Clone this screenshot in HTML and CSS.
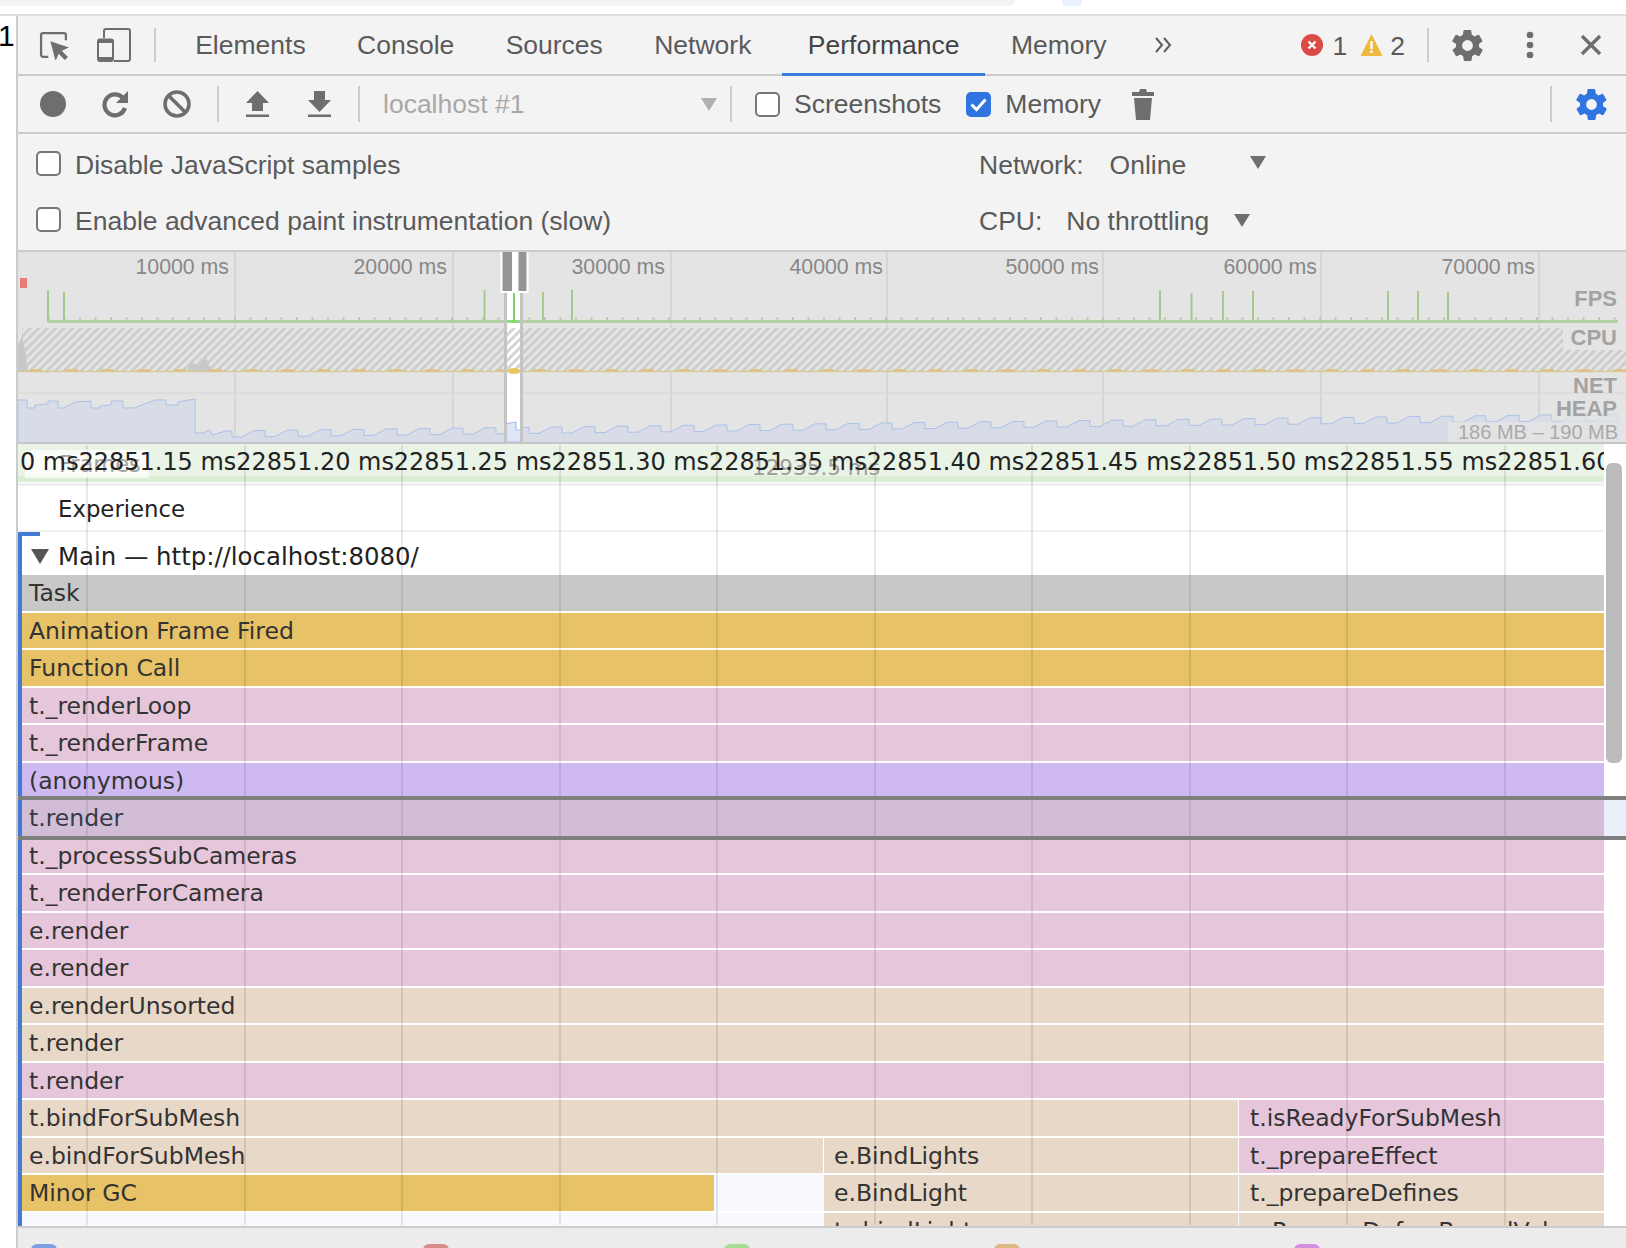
FILE: index.html
```html
<!DOCTYPE html>
<html lang="en">
<head>
<meta charset="utf-8">
<title>DevTools Performance</title>
<link rel="stylesheet" href="styles.css">
</head>
<body>
<div class="page">
  <div class="strip"><div class="strip-gray"></div><div class="strip-blue"></div></div>
  <div class="content">
    <div class="gutter">1</div>
    <div class="devtools">

      <div class="bar bar-tabs">
        <svg class="ic ic-inspect" viewBox="0 0 29 28"><path d="M9 25H4a2 2 0 0 1-2-2V4a2 2 0 0 1 2-2h20a2 2 0 0 1 2 2v5" fill="none" stroke="#6e6e6e" stroke-width="2.2"/><path d="M11 10l18 6-7 3 6 6-3 3-6-6-3 7z" fill="#6e6e6e"/></svg>
        <svg class="ic ic-device" viewBox="0 0 34 34"><path d="M7 10V3a2 2 0 0 1 2-2h22a2 2 0 0 1 2 2v28a2 2 0 0 1-2 2H17" fill="none" stroke="#6e6e6e" stroke-width="2"/><rect x="1" y="11.500" width="15" height="21.500" rx="2" fill="none" stroke="#6e6e6e" stroke-width="2"/><rect x="1" y="11" width="15" height="4" fill="#6e6e6e"/><rect x="1" y="29" width="15" height="4" fill="#6e6e6e"/></svg>
        <span class="sep sep-tabs"></span>
        <div class="tabs">
          <span class="tab">Elements</span>
          <span class="tab">Console</span>
          <span class="tab">Sources</span>
          <span class="tab">Network</span>
          <span class="tab tab-active">Performance</span>
          <span class="tab">Memory</span>
        </div>
        <svg class="ic ic-more" viewBox="0 0 19 16"><path d="M2 1l6 7-6 7M10 1l6 7-6 7" fill="none" stroke="#5f5f5f" stroke-width="2"/></svg>
        <span class="spacer"></span>
        <svg class="ic ic-badge" viewBox="0 0 22 22"><circle cx="11" cy="11" r="11" fill="#dc4a45"/><path d="M7.500 7.500l7 7M14.500 7.500l-7 7" stroke="#fff" stroke-width="2.400"/></svg>
        <span class="count">1</span>
        <svg class="ic ic-badge ic-warn" viewBox="0 0 22 22"><path d="M11 0l11 22H0z" fill="#f0b93e"/><rect x="9.800" y="7" width="2.400" height="8" fill="#fff"/><rect x="9.800" y="16.500" width="2.400" height="2.500" fill="#fff"/></svg>
        <span class="count count-warn">2</span>
        <span class="sep sep-err"></span>
        <svg class="ic ic-gear" viewBox="0 0 24 24"><path fill="#6e6e6e" d="M19.400 13c.1-.3.1-.7.100-1s0-.7-.1-1l2.100-1.600c.2-.2.200-.4.100-.6l-2-3.500c-.1-.2-.4-.3-.6-.2l-2.500 1c-.5-.4-1.100-.7-1.700-1l-.4-2.700c0-.2-.2-.4-.5-.4h-4c-.3 0-.5.200-.5.400l-.4 2.700c-.6.300-1.200.6-1.700 1l-2.500-1c-.2-.1-.5 0-.6.200l-2 3.500c-.1.200-.1.400.1.600L4.600 11c-.1.300-.1.700-.1 1s0 .7.100 1l-2.100 1.600c-.2.200-.2.400-.1.600l2 3.500c.1.200.4.3.6.2l2.500-1c.5.400 1.100.7 1.700 1l.4 2.700c0 .2.200.4.500.4h4c.3 0 .5-.2.500-.4l.4-2.700c.6-.3 1.200-.6 1.700-1l2.500 1c.2.100.5 0 .6-.2l2-3.500c.1-.2.1-.4-.1-.6zM12 15.500a3.500 3.500 0 1 1 0-7 3.500 3.500 0 0 1 0 7z"/></svg>
        <svg class="ic ic-dots" viewBox="0 0 8 28"><circle cx="4" cy="4" r="3.300" fill="#6e6e6e"/><circle cx="4" cy="14" r="3.300" fill="#6e6e6e"/><circle cx="4" cy="24" r="3.300" fill="#6e6e6e"/></svg>
        <svg class="ic ic-close" viewBox="0 0 22 22"><path d="M2 2l18 18M20 2L2 20" stroke="#6e6e6e" stroke-width="3.400"/></svg>
      </div>

      <div class="bar bar-actions">
        <svg class="ic ic-record" viewBox="0 0 26 26"><circle cx="13" cy="13" r="13" fill="#6e6e6e"/></svg>
        <svg class="ic ic-reload" viewBox="0 0 27 27"><path d="M23 17a10.500 10.500 0 1 1-2-10" fill="none" stroke="#6e6e6e" stroke-width="4.200"/><path d="M26 0v12H14z" fill="#6e6e6e"/></svg>
        <svg class="ic ic-clear" viewBox="0 0 28 28"><circle cx="14" cy="14" r="12" fill="none" stroke="#6e6e6e" stroke-width="3.600"/><path d="M6 6l16 16" stroke="#6e6e6e" stroke-width="3.600"/></svg>
        <span class="sep sep-clear"></span>
        <svg class="ic ic-load" viewBox="0 0 23 26"><path d="M11.500 0L23 12h-6v8H6v-8H0z" fill="#6e6e6e"/><rect y="23.500" width="23" height="2.500" fill="#6e6e6e"/></svg>
        <svg class="ic ic-save" viewBox="0 0 23 26"><path d="M6 0h11v9h6L11.500 21 0 9h6z" fill="#6e6e6e"/><rect y="23.500" width="23" height="2.500" fill="#6e6e6e"/></svg>
        <span class="sep sep-save"></span>
        <span class="target">localhost #1</span>
        <span class="arrow arrow-target"></span>
        <span class="sep sep-target"></span>
        <span class="check"></span>
        <span class="label label-shots">Screenshots</span>
        <span class="check check-on"><svg viewBox="0 0 25 25"><path d="M5.500 12.500l5 5 9-10" fill="none" stroke="#fff" stroke-width="3"/></svg></span>
        <span class="label label-mem">Memory</span>
        <svg class="ic ic-trash" viewBox="0 0 22 31"><path d="M8 0h6l1 3h7v4H0V3h7zM2 9h18l-2 22H4z" fill="#6e6e6e"/></svg>
        <span class="spacer"></span>
        <span class="sep sep-capture"></span>
        <svg class="ic ic-gear ic-gear-blue" viewBox="0 0 24 24"><path fill="#2f74e0" d="M19.400 13c.1-.3.1-.7.100-1s0-.7-.1-1l2.100-1.600c.2-.2.200-.4.100-.6l-2-3.500c-.1-.2-.4-.3-.6-.2l-2.500 1c-.5-.4-1.100-.7-1.700-1l-.4-2.700c0-.2-.2-.4-.5-.4h-4c-.3 0-.5.200-.5.400l-.4 2.700c-.6.300-1.200.6-1.700 1l-2.500-1c-.2-.1-.5 0-.6.200l-2 3.500c-.1.200-.1.400.1.600L4.600 11c-.1.300-.1.700-.1 1s0 .7.100 1l-2.100 1.600c-.2.200-.2.400-.1.600l2 3.500c.1.200.4.3.6.2l2.500-1c.5.400 1.100.7 1.700 1l.4 2.700c0 .2.200.4.500.4h4c.3 0 .5-.2.500-.4l.4-2.700c.6-.3 1.200-.6 1.700-1l2.500 1c.2.100.5 0 .6-.2l2-3.500c.1-.2.1-.4-.1-.6zM12 15.500a3.500 3.500 0 1 1 0-7 3.500 3.500 0 0 1 0 7z"/></svg>
      </div>

      <div class="options">
        <div class="opt-row">
          <span class="opt-left"><span class="check"></span><span class="label">Disable JavaScript samples</span></span>
          <span class="label opt-name">Network:</span>
          <span class="label opt-net">Online</span>
          <span class="arrow arrow-net"></span>
        </div>
        <div class="opt-row">
          <span class="opt-left"><span class="check"></span><span class="label">Enable advanced paint instrumentation (slow)</span></span>
          <span class="label opt-name">CPU:</span>
          <span class="label opt-cpu">No throttling</span>
          <span class="arrow arrow-cpu"></span>
        </div>
      </div>

      <div class="overview">
        <div class="ov-ruler">
          <div class="ov-cell">10000 ms</div>
          <div class="ov-cell">20000 ms</div>
          <div class="ov-cell">30000 ms</div>
          <div class="ov-cell">40000 ms</div>
          <div class="ov-cell">50000 ms</div>
          <div class="ov-cell">60000 ms</div>
          <div class="ov-cell">70000 ms</div>
        </div>
        <svg class="ov-graph" viewBox="18 252 1608 190">
          <defs>
            <pattern id="hatch" width="6" height="6" patternUnits="userSpaceOnUse" patternTransform="rotate(45)"><rect width="6" height="6" fill="#e4e4e4"/><rect width="3" height="6" fill="#cdcdcd"/></pattern>
            <pattern id="hatch-sel" width="6" height="6" patternUnits="userSpaceOnUse" patternTransform="rotate(45)"><rect width="6" height="6" fill="#fff"/><rect width="3" height="6" fill="#d4d4d4"/></pattern>
          </defs>
          <rect x="20" y="278" width="7" height="10" fill="#e57f76"/>
          <path d="M48 290V322M64 292V322M484.500 290V322M543 292V322M572 290V322M1160 290V322M1191.500 293V322M1223 291V322M1253 291V322M1388 291V322M1418 291V322M1448 292V322" stroke="#a5c98f" stroke-width="2"/>
          <rect x="48" y="320" width="1570" height="3" fill="#b0d2a0"/>
          <line x1="48" y1="318.500" x2="1618" y2="318.500" stroke="#a5c98f" stroke-width="2" stroke-dasharray="2 13.500"/>
          <rect x="22" y="328" width="1604" height="44" fill="url(#hatch)"/>
          <path d="M18 372V345L22 336 26 355 28 372zM186 372L192 362 198 366 206 358 212 372z" fill="#c8c8c8"/>
          <line x1="18" y1="371.500" x2="1626" y2="371.500" stroke="#dcc596" stroke-width="1.500"/>
          <line x1="30" y1="370.500" x2="1626" y2="370.500" stroke="#dfc283" stroke-width="2.500" stroke-dasharray="11 25" stroke-linecap="round"/>
          <line x1="18" y1="393" x2="1626" y2="393" stroke="#dbdbdb" stroke-width="1.500"/>
          <path fill="#d8dce6" stroke="#abc1ea" stroke-width="1" d="M18 400H27V408H35V405L48 404V401H58V408H64L75 402 91 401V408H100V406L111 405V401H123V408H134L155 400H166V405H178V402L195 399V433H203L210 430 212 435 226 431H232v6h10l12-6.400h11v6h10l12-6.400h11v6h10l12-6.400h11v6h10l12-6.400h11v6h10l12-6.400h11v6h10l12-6.400h11v6h10l12-6.400h11v6h10l12-6.400h11v6h10l12-6.400h11v6h10l12-6.400h11v6h10l12-6.400h11v6h10l12-6.400h11v6h10l12-6.400h11v6h10l12-6.400h11v6h10l12-6.400h11v6h10l12-6.400h11v6h10l12-6.400h11v6h10l12-6.400h11v6h10l12-6.400h11v6h10l12-6.400h11v6h10l12-6.400h11v6h10l12-6.400h11v6h10l12-6.400h11v6h10l12-6.400h11v6h10l12-6.400h11v6h10l12-6.400h11v6h10l12-6.400h11v6h10l12-6.400h11v6h10l12-6.400h11v6h10l12-6.400h11v6h10l12-6.400h11v6h10l12-6.400h11v6h10l12-6.400h11v6h10l12-6.400h11v6h10l12-6.400h11v6h10l12-6.400h11v6h10l12-6.400h11v6h10l12-6.400h11v6h10l12-6.400h11v6h10l12-6.400h11v6h10l12-6.400h11v6h10l12-6.400h11V443H18z"/>
          <rect x="505" y="293" width="17" height="149" fill="#fff"/>
          <rect x="505" y="328" width="17" height="44" fill="url(#hatch-sel)"/>
          <rect x="505" y="320" width="17" height="3" fill="#8fe07a"/>
          <line x1="514" y1="292" x2="514" y2="322" stroke="#7fd06a" stroke-width="2"/>
          <ellipse cx="514" cy="371" rx="7" ry="3" fill="#e9c566"/>
          <path d="M505 424L516 422V430H522V442H505z" fill="#dfe6f7" stroke="#9db9ef" stroke-width="1"/>
          <path d="M505.500 293V442M521.500 293V442" stroke="#c4c4c4" stroke-width="3"/>
          <rect x="500.500" y="252" width="28" height="41" fill="#fff"/>
          <rect x="502.500" y="252" width="9.500" height="39" fill="#959595"/>
          <rect x="518.500" y="252" width="8" height="39" fill="#959595"/>
        </svg>
        <span class="ov-label ov-fps">FPS</span>
        <span class="ov-label ov-cpu">CPU</span>
        <span class="ov-label ov-net">NET</span>
        <span class="ov-label ov-heap">HEAP</span>
        <span class="ov-range">186 MB – 190 MB</span>
      </div>

      <div class="flame">
        <div class="time-ruler"><span class="time-text">0 ms22851.15 ms22851.20 ms22851.25 ms22851.30 ms22851.35 ms22851.40 ms22851.45 ms22851.50 ms22851.55 ms22851.60 ms</span></div>
        <div class="track-experience">Experience</div>
        <div class="main-group">
          <div class="main-head"><span class="tri"></span>Main — http://localhost:8080/</div>
          <div class="rows">
            <div class="row c-gray">Task</div>
            <div class="row c-orange">Animation Frame Fired</div>
            <div class="row c-orange">Function Call</div>
            <div class="row c-pink">t._renderLoop</div>
            <div class="row c-pink">t._renderFrame</div>
            <div class="row c-purple">(anonymous)</div>
            <div class="row c-pink">t.render</div>
            <div class="row c-pink">t._processSubCameras</div>
            <div class="row c-pink">t._renderForCamera</div>
            <div class="row c-pink">e.render</div>
            <div class="row c-pink">e.render</div>
            <div class="row c-tan">e.renderUnsorted</div>
            <div class="row c-tan">t.render</div>
            <div class="row c-pink">t.render</div>
            <div class="row-split">
              <div class="seg c-tan span-3">t.bindForSubMesh</div>
              <div class="seg c-pink">t.isReadyForSubMesh</div>
            </div>
            <div class="row-split">
              <div class="seg c-tan span-2">e.bindForSubMesh</div>
              <div class="seg seg-mid c-tan">e.BindLights</div>
              <div class="seg c-pink">t._prepareEffect</div>
            </div>
            <div class="row-split row-low">
              <div class="seg c-orange">Minor GC</div>
              <div class="seg seg-empty"></div>
              <div class="seg seg-mid c-tan">e.BindLight</div>
              <div class="seg c-tan">t._prepareDefines</div>
            </div>
            <div class="row-split row-low">
              <div class="seg seg-empty span-2"></div>
              <div class="seg seg-mid c-tan">t._bindLight</div>
              <div class="seg c-tan">e.PrepareDef...eBoundValues</div>
            </div>
          </div>
        </div>
        <div class="grid-lines">
          <i></i><i></i><i></i><i></i><i></i><i></i><i></i><i></i><i></i><i></i>
        </div>
        <div class="frames-tag">Frames</div>
        <div class="frame-time">12935.5 ms</div>
        <div class="selected-row"></div>
        <div class="scrollbar"></div>
      </div>

      <div class="legend">
        <span class="swatch sw-blue"></span>
        <span class="swatch sw-red"></span>
        <span class="swatch sw-green"></span>
        <span class="swatch sw-tan"></span>
        <span class="swatch sw-purple"></span>
      </div>
    </div>
  </div>
</div>
</body>
</html>
```

FILE: styles.css
```css
* { box-sizing: border-box; }
html, body { margin: 0; padding: 0; background: #fff; }
.page { width: 1626px; height: 1248px; display: flex; flex-direction: column; overflow: hidden; font-family: "Liberation Sans", Arial, sans-serif; }

.strip { height: 16px; flex: none; display: flex; align-items: flex-start; border-bottom: 2px solid #dcdce1; }
.strip-gray { width: 1015px; height: 6px; background: #f1f3f4; border-bottom-right-radius: 10px; }
.strip-blue { width: 20px; height: 6px; margin-left: 47px; background: #e8f1fd; border-radius: 0 0 4px 4px; }

.content { flex: 1; display: flex; min-height: 0; }
.gutter { flex: none; width: 12px; margin-left: -2px; margin-right: 6px; font-size: 30px; line-height: 40px; color: #000; }
.devtools { flex: 1; min-width: 0; border-left: 2px solid #ccc; display: flex; flex-direction: column; background: #f3f3f3; position: relative; }

.bar { display: flex; align-items: center; border-bottom: 2px solid #ccc; flex: none; color: #5a5a5a; font-size: 26.500px; }
.bar-tabs { height: 60px; padding-left: 21px; }
.bar-actions { height: 58px; padding-left: 22px; }
.spacer { flex: 1; }
.ic { display: block; flex: none; }
.sep { width: 2px; flex: none; background: #ccc; }

.ic-inspect { width: 30px; height: 29px; margin-top: 1px; }
.ic-device { width: 34px; height: 34px; margin-left: 28px; }
.sep-tabs { height: 34px; margin-left: 23px; }
.tabs { display: flex; align-self: stretch; margin-left: 13.500px; }
.tab { display: flex; align-items: center; padding: 2px 25.700px 0; border-bottom: 3px solid transparent; margin-bottom: -2px; }
.tab-active { border-bottom-color: #3b7ddb; color: #444; margin-left: 5px; }
.ic-more { width: 19px; height: 16px; margin-left: 22px; }
.ic-badge { width: 22px; height: 22px; }
.ic-warn { width: 23px; margin-left: 13px; }
.count { margin-left: 10px; padding-top: 2px; }
.count-warn { margin-left: 7px; }
.sep-err { height: 34px; margin-left: 22px; }
.ic-gear { width: 37px; height: 37px; margin-left: 20px; }
.ic-dots { width: 8px; height: 28px; margin-left: 40px; }
.ic-close { width: 22px; height: 22px; margin-left: 46px; margin-right: 24px; }

.ic-record { width: 26px; height: 26px; }
.ic-reload { width: 27px; height: 27px; margin-left: 36px; }
.ic-clear { width: 28px; height: 28px; margin-left: 34px; }
.sep-clear { height: 36px; margin-left: 26px; }
.ic-load { width: 23px; height: 26px; margin-left: 27px; }
.ic-save { width: 23px; height: 26px; margin-left: 39px; }
.sep-save { height: 36px; margin-left: 27px; }
.target { color: #a8a8a8; margin-left: 23px; width: 318px; padding-top: 1px; }
.arrow { width: 0; height: 0; flex: none; border-left: 8px solid transparent; border-right: 8px solid transparent; border-top: 13px solid #6e6e6e; }
.arrow-target { border-top-color: #b0b0b0; }
.sep-target { height: 36px; margin-left: 13px; }
.check { display: block; flex: none; width: 25px; height: 25px; border: 2px solid #767676; border-radius: 5px; background: #fff; }
.bar-actions > .check { margin-left: 23px; }
.check-on { background: #2f74e0; border-color: #2f74e0; }
.check-on svg { display: block; width: 25px; height: 25px; margin: -2px; }
.bar-actions > .check-on { margin-left: 25px; }
.label { color: #5a5a5a; font-size: 26.500px; white-space: nowrap; }
.bar-actions .label { padding-top: 1px; }
.label-shots { margin-left: 14px; }
.label-mem { margin-left: 14px; }
.ic-trash { width: 22px; height: 31px; margin-left: 31px; }
.sep-capture { height: 36px; }
.ic-gear-blue { margin-left: 21px; margin-right: 16px; }

.options { height: 116px; flex: none; display: flex; flex-direction: column; }
.opt-row { height: 62px; display: flex; align-items: center; }
.opt-row + .opt-row { height: 54px; padding-bottom: 3px; }
.opt-left { display: flex; align-items: center; gap: 14px; width: 961px; padding-left: 18px; }
.opt-left .check { margin-top: -4px; }
.opt-net { margin-left: 26px; }
.arrow-net { margin-left: 64px; margin-top: -5px; }
.opt-cpu { margin-left: 24px; }
.arrow-cpu { margin-left: 25px; margin-top: -3px; }

.overview { height: 194px; flex: none; position: relative; background: #e4e4e4; border-top: 2px solid #ccc; border-bottom: 2px solid #c6c6c6; overflow: hidden; }
.ov-ruler { display: grid; grid-template-columns: 218px 218px 218px 216px 216px 218px 218px; height: 100%; }
.ov-cell { border-right: 2px solid #d6d6d6; text-align: right; padding: 3px 5px 0 0; font-size: 21.300px; line-height: 24px; color: #888; white-space: nowrap; }
.ov-cell:nth-child(n+4) { padding-right: 3px; }
.ov-graph { position: absolute; left: 0; top: 0; width: 1608px; height: 190px; }
.ov-label { position: absolute; right: 9px; font-weight: 700; font-size: 22px; line-height: 24px; color: #a3a3a3; }
.ov-fps { top: 35px; }
.ov-cpu { top: 74px; padding-left: 8px; background: #e4e4e4; right: 0; padding-right: 9px; }
.ov-net { top: 122px; }
.ov-heap { top: 145px; padding-left: 4px; background: rgba(228,228,228,.7); right: 0; padding-right: 9px; }
.ov-range { position: absolute; right: 0; top: 170px; width: 178px; padding-left: 10px; font-size: 20px; line-height: 21px; color: #aaa; background: rgba(228,228,228,.85); white-space: nowrap; }

.flame { flex: 1; min-height: 0; position: relative; background: #fff; overflow: hidden; font-family: "DejaVu Sans", sans-serif; }
.time-ruler { width: 1586px; height: 39px; padding: 2px 0 0 2px; font-size: 23.950px; line-height: 32px; white-space: nowrap; overflow: hidden; color: #222; background: linear-gradient(#e9f4e6 0 32px, #dcedd5 32px 38px, #fff 38px); }
.time-text { position: relative; z-index: 2; }
.track-experience { width: 1586px; height: 49px; padding-left: 40px; font-size: 22.800px; line-height: 46px; color: #222; border-top: 3px solid #f0f0f0; border-bottom: 2px solid #f0f0f0; }
.main-group { width: 1586px; position: relative; border-left: 4px solid #4479d6; height: 694px; overflow: hidden; }
.main-group::before { content: ""; position: absolute; left: -4px; top: 0; width: 22px; height: 4px; background: #4479d6; z-index: 1; }
.main-head { height: 43px; display: flex; align-items: center; padding-left: 9px; padding-top: 5px; font-size: 24.400px; color: #222; white-space: nowrap; }
.tri { width: 0; height: 0; margin-right: 9px; border-left: 9px solid transparent; border-right: 9px solid transparent; border-top: 15px solid #555; }
.rows { display: flex; flex-direction: column; gap: 2px; }
.row, .seg { height: 35.500px; line-height: 37px; padding-left: 7px; font-size: 23.500px; color: #333; white-space: nowrap; overflow: hidden; }
.row { flex: none; }
.row-split { flex: none; display: grid; grid-template-columns: 692px 108px 414px 1fr; column-gap: 1px; }
.seg:last-child { padding-left: 11px; }
.seg-mid { padding-left: 10px; }
.row-low { background: #f8f9fe; }
.span-2 { grid-column: span 2; }
.span-3 { grid-column: span 3; }
.seg-empty { background: transparent; }
.c-gray { background: #c8c8c8; }
.c-orange { background: #e8c266; }
.c-pink { background: #e6c6da; }
.c-purple { background: #cfb9f1; }
.c-tan { background: #e8d8c7; }

.grid-lines { position: absolute; left: 0; top: 1px; width: 1586px; height: 780px; padding-left: 68px; display: flex; gap: 155.500px; pointer-events: none; }
.grid-lines i { display: block; flex: none; width: 2px; background: rgba(0,0,0,.09); }
.frames-tag { position: absolute; z-index: 1; left: 7px; top: 6px; width: 124px; height: 28px; padding-left: 34px; font-size: 22.500px; line-height: 28px; color: #a4a4a4; background: rgba(255,255,255,.7); }
.frame-time { position: absolute; z-index: 1; left: 734px; top: 10px; font-size: 21.500px; line-height: 28px; color: #9c9c9c; white-space: nowrap; }
.selected-row { position: absolute; left: 0; right: 0; top: 352px; height: 44px; border-top: 4px solid #7f7f7f; border-bottom: 4px solid #7f7f7f; background: rgba(63,126,200,.115); }
.scrollbar { position: absolute; left: 1588px; top: 19px; width: 16px; height: 300px; border-radius: 6px; background: #bbb; }

.legend { height: 22px; flex: none; position: relative; background: #ececec; border-top: 2px solid #ccc; display: flex; overflow: hidden; }
.swatch { display: block; flex: none; width: 26px; height: 20px; margin-top: 16px; border-radius: 6px; }
.sw-blue { background: #7b9fe0; margin-left: 13px; }
.sw-red { background: #d98b85; margin-left: 366px; }
.sw-green { background: #a7dc95; margin-left: 275px; }
.sw-tan { background: #dcb984; margin-left: 244px; }
.sw-purple { background: #d48fe0; margin-left: 274px; }
```
